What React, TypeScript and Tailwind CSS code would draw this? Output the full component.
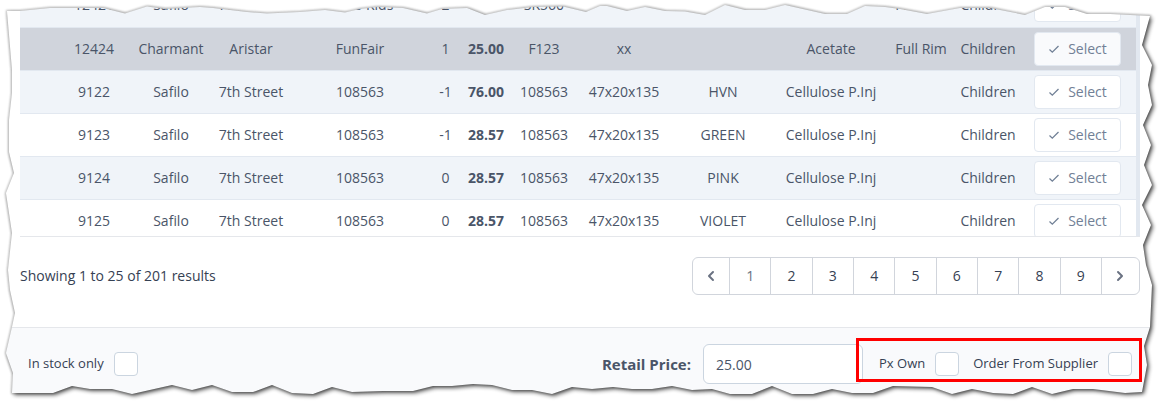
import { useState } from "react";

type Frame = {
  id: string;
  supplier: string;
  brand: string;
  model: string;
  stock: number;
  price: string;
  code: string;
  size: string;
  colour: string;
  material: string;
  rim: string;
  group: string;
};

const frames: Frame[] = [
  { id: "12421", supplier: "Safilo", brand: "7th Street", model: "Safilo Kids", stock: 2, price: "", code: "SK560", size: "", colour: "", material: "", rim: "Full Rim", group: "Children" },
  { id: "12424", supplier: "Charmant", brand: "Aristar", model: "FunFair", stock: 1, price: "25.00", code: "F123", size: "xx", colour: "", material: "Acetate", rim: "Full Rim", group: "Children" },
  { id: "9122", supplier: "Safilo", brand: "7th Street", model: "108563", stock: -1, price: "76.00", code: "108563", size: "47x20x135", colour: "HVN", material: "Cellulose P.Inj", rim: "", group: "Children" },
  { id: "9123", supplier: "Safilo", brand: "7th Street", model: "108563", stock: -1, price: "28.57", code: "108563", size: "47x20x135", colour: "GREEN", material: "Cellulose P.Inj", rim: "", group: "Children" },
  { id: "9124", supplier: "Safilo", brand: "7th Street", model: "108563", stock: 0, price: "28.57", code: "108563", size: "47x20x135", colour: "PINK", material: "Cellulose P.Inj", rim: "", group: "Children" },
  { id: "9125", supplier: "Safilo", brand: "7th Street", model: "108563", stock: 0, price: "28.57", code: "108563", size: "47x20x135", colour: "VIOLET", material: "Cellulose P.Inj", rim: "", group: "Children" },
];

const pages = [1, 2, 3, 4, 5, 6, 7, 8, 9];

const rowColour = (index: number, selected: boolean) => {
  if (selected) return "bg-[#d0d4dc]";
  return index % 2 === 0 ? "bg-[#f0f4f9]" : "bg-white";
};

const FramesTable = () => {
  const [selected, setSelected] = useState("12424");

  return (
    <div className="h-[237px] overflow-hidden border-b border-gray-200">
      <div className="-mt-4 border-r-4 border-[#e2e8f0]">
        <table className="w-full table-fixed border-collapse text-center text-sm text-[#4a5568]">
          <colgroup>
            <col className="w-[40px]" />
            <col className="w-[68px]" />
            <col className="w-[86px]" />
            <col className="w-[74px]" />
            <col className="w-[144px]" />
            <col className="w-[27px]" />
            <col className="w-[54px]" />
            <col className="w-[62px]" />
            <col className="w-[98px]" />
            <col className="w-[100px]" />
            <col className="w-[116px]" />
            <col className="w-[64px]" />
            <col className="w-[70px]" />
            <col className="w-[113px]" />
          </colgroup>
          <tbody>
            {frames.map((frame, index) => (
              <tr
                key={frame.id}
                className={`h-[43px] whitespace-nowrap border-b border-[#e2e8f0] ${rowColour(index, frame.id === selected)}`}
              >
                <td />
                <td>{frame.id}</td>
                <td>{frame.supplier}</td>
                <td>{frame.brand}</td>
                <td>{frame.model}</td>
                <td>{frame.stock}</td>
                <td className="font-bold">{frame.price}</td>
                <td>{frame.code}</td>
                <td>{frame.size}</td>
                <td>{frame.colour}</td>
                <td>{frame.material}</td>
                <td>{frame.rim}</td>
                <td>{frame.group}</td>
                <td className="pr-1">
                  <button
                    type="button"
                    onClick={() => setSelected(frame.id)}
                    className={`inline-flex h-[34px] w-[87px] items-center justify-center gap-2 rounded border border-[#e2e8f0] align-middle text-[#718096] ${frame.id === selected ? "bg-[#f9fafc]" : "bg-white"}`}
                  >
                    <svg className="h-3 w-3" viewBox="0 0 12 12" fill="none" stroke="currentColor" strokeWidth="1.3">
                      <path d="M1.5 6.5 4.3 9.2 10.5 3" />
                    </svg>
                    Select
                  </button>
                </td>
              </tr>
            ))}
          </tbody>
        </table>
      </div>
    </div>
  );
};

const Chevron = ({ d }: { d: string }) => (
  <svg className="h-5 w-5" viewBox="0 0 20 20" fill="currentColor">
    <path fillRule="evenodd" clipRule="evenodd" d={d} />
  </svg>
);

const Pagination = () => (
  <div className="flex items-center justify-between pt-5">
    <p className="text-sm text-gray-700">Showing 1 to 25 of 201 results</p>
    <nav
      aria-label="Pagination"
      className="flex h-[38px] w-[448px] divide-x divide-gray-300 rounded-md border border-gray-300 bg-white text-sm text-gray-700"
    >
      <button type="button" aria-label="Previous" className="flex w-[37px] items-center justify-center text-gray-500">
        <Chevron d="M12.707 5.293a1 1 0 010 1.414L9.414 10l3.293 3.293a1 1 0 01-1.414 1.414l-4-4a1 1 0 010-1.414l4-4a1 1 0 011.414 0z" />
      </button>
      {pages.map((page) => (
        <button key={page} type="button" className={`flex-1 ${page === 1 ? "text-gray-500" : ""}`}>
          {page}
        </button>
      ))}
      <button type="button" aria-label="Next" className="flex w-[37px] items-center justify-center text-gray-500">
        <Chevron d="M7.293 14.707a1 1 0 010-1.414L10.586 10 7.293 6.707a1 1 0 011.414-1.414l4 4a1 1 0 010 1.414l-4 4a1 1 0 01-1.414 0z" />
      </button>
    </nav>
  </div>
);

const CheckField = ({ label }: { label: string }) => (
  <label className="flex items-center gap-2.5 text-[13px] text-gray-700">
    {label}
    <input
      type="checkbox"
      className="h-6 w-6 appearance-none rounded border border-[#cbd5e0] bg-white checked:bg-[#4a5568]"
    />
  </label>
);

const Footer = () => (
  <footer className="mt-8 flex items-center justify-between border-t border-gray-200 bg-[#f9fafc] pt-4 pr-[29px] pb-5 pl-7">
    <CheckField label="In stock only" />
    <div className="flex items-center gap-4">
      <div className="flex items-center gap-3">
        <label htmlFor="price" className="text-[15px] font-bold text-[#4a5568]">
          Retail Price:
        </label>
        <input
          id="price"
          type="text"
          defaultValue="25.00"
          className="h-10 w-40 rounded-md border border-[#cbd5e0] bg-white px-3 text-sm text-[#4a5568]"
        />
      </div>
      <div className="relative flex items-center gap-3.5">
        <CheckField label="Px Own" />
        <CheckField label="Order From Supplier" />
        <div className="pointer-events-none absolute -top-[14px] -right-[10px] -bottom-[6px] -left-[23px] border-3 border-[#ff0000]" />
      </div>
    </div>
  </footer>
);

// Outline of the ripped sheet, clockwise from the top left corner.
const sheet =
  "M7 11 20 11 50 8 103 8 125 13.5 147 6.5 165 9 200 7 213 8 247 12 267 13.5 300 12 325 10 345 12.5 360 9 378 7 403 8 427 13.5 442 9 467 8 485 15 507 10 533 7 563 6.5 586 12 600 6 607 6 627 11 645 7 665 11 685 11.5 705 15 725 5 745 10 765 10 785 5 825 14 847 14 865 6 885 7 900 9 927 14 960 8 990 8 1025 15 1045 7 1065 7 1087 14 1110 14 1150 16 " +
  "1142 45 1152 65 1148 85 1152 105 1143 125 1151 145 1144 165 1152 185 1142 205 1151 225 1143 245 1146 265 1152 285 1150 327 1144 346 1147 365 1142 392 " +
  "1125 393 1093 389 1073 389 1052 394 1032 387 1013 394 993 393 972 389 952 394 932 387 893 386 873 393 852 393 832 389 813 394 792 394 772 386 752 394 730 394 712 389 692 390 672 386 652 389 632 389 613 387 592 389 572 387 552 394 532 390 512 390 492 385 473 384 452 386 433 386 413 391 383 391 352 392 332 387 313 394 292 393 272 385 253 392 232 392 212 385 192 390 172 385 132 394 112 389 90 389 72 386 53 393 12 393 " +
  "13 373 6 353 12 327 15 313 10 290 8 270 12 233 6 193 14 173 9 152 9 120 12 93 12 70Z";
const outside = `M0 0H1161V404H0Z ${sheet}`;

const TornEdge = () => (
  <svg
    aria-hidden="true"
    className="pointer-events-none absolute inset-0 h-full w-full"
    viewBox="0 0 1161 404"
    preserveAspectRatio="none"
  >
    <defs>
      <filter id="soften" x="-5%" y="-5%" width="110%" height="110%">
        <feGaussianBlur stdDeviation="2" />
      </filter>
      <filter id="halo" x="-5%" y="-5%" width="110%" height="110%">
        <feGaussianBlur stdDeviation="1" />
      </filter>
      <clipPath id="outside">
        <path clipRule="evenodd" d={outside} />
      </clipPath>
    </defs>
    <path fill="#fff" fillRule="evenodd" d={outside} />
    <g clipPath="url(#outside)">
      <path d={sheet} fill="none" stroke="#000" strokeWidth="2" opacity="0.25" filter="url(#halo)" />
      <path d={sheet} transform="translate(2 2)" fill="#000" opacity="0.65" filter="url(#soften)" />
    </g>
  </svg>
);

const App = () => (
  <main className="relative overflow-hidden bg-white font-['Open_Sans','Noto_Sans',sans-serif]">
    <div className="pr-[21px] pl-5">
      <FramesTable />
      <Pagination />
    </div>
    <Footer />
    <TornEdge />
  </main>
);

export default App;
